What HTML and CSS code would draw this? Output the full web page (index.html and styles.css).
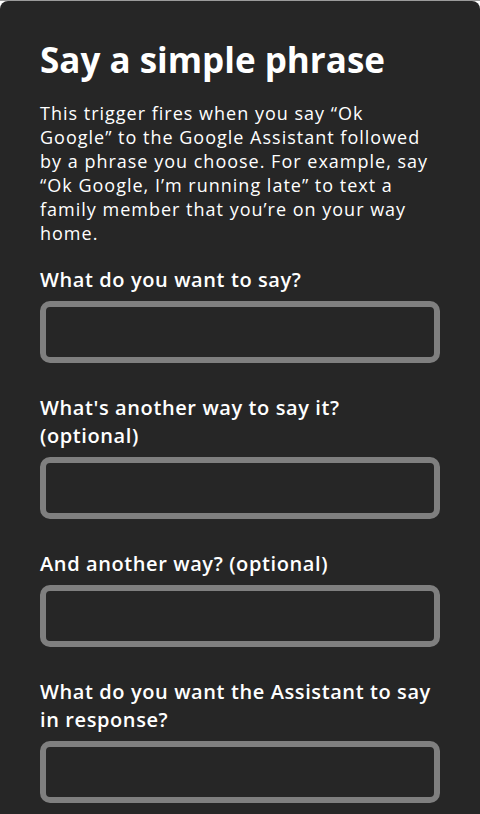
FILE: index.html
```html
<!DOCTYPE html>
<html lang="en">
<head>
<meta charset="utf-8">
<title>Say a simple phrase</title>
<link rel="stylesheet" href="styles.css">
</head>
<body>
<main class="panel">
  <h1 class="title">Say a simple phrase</h1>
  <p class="desc">This trigger fires when you say “Ok Google” to the Google Assistant followed by a phrase you choose. For example, say “Ok Google, I’m running late” to text a family member that you’re on your way home.</p>
  <form class="fields">
    <label class="field">
      <span class="label">What do you want to say?</span>
      <input class="input" type="text">
    </label>
    <label class="field">
      <span class="label">What's another way to say it? (optional)</span>
      <input class="input" type="text">
    </label>
    <label class="field">
      <span class="label">And another way? (optional)</span>
      <input class="input" type="text">
    </label>
    <label class="field">
      <span class="label">What do you want the Assistant to say in response?</span>
      <input class="input" type="text">
    </label>
  </form>
</main>
</body>
</html>
```
FILE: styles.css
```css
html {
  background: #ffffff;
}
body {
  margin: 0;
  border-top: 1px solid #9b9b9b;
  background: #ffffff;
  font-family: "Open Sans", "Noto Sans", sans-serif;
  color: #ffffff;
}
.panel {
  background: #262626;
  border-radius: 8px 8px 0 0;
  padding: 35px 40px 40px;
  min-height: 900px;
}
.title {
  margin: 0;
  font-size: 35px;
  line-height: 48px;
  font-weight: 700;
}
.desc {
  margin: 17px 0 0;
  font-size: 18px;
  line-height: 24px;
  font-weight: 400;
  letter-spacing: 1px;
}
.fields {
  display: flex;
  flex-direction: column;
  gap: 31px;
  margin-top: 21px;
}
.field {
  display: flex;
  flex-direction: column;
  gap: 7px;
}
.label {
  font-size: 20px;
  line-height: 28px;
  font-weight: 600;
  letter-spacing: 0.6px;
}
.input {
  box-sizing: border-box;
  width: 100%;
  height: 62px;
  margin: 0;
  border: 6px solid #7f7f7f;
  border-radius: 10px;
  background: #262626;
  color: #ffffff;
  font: inherit;
  outline: none;
}
```
